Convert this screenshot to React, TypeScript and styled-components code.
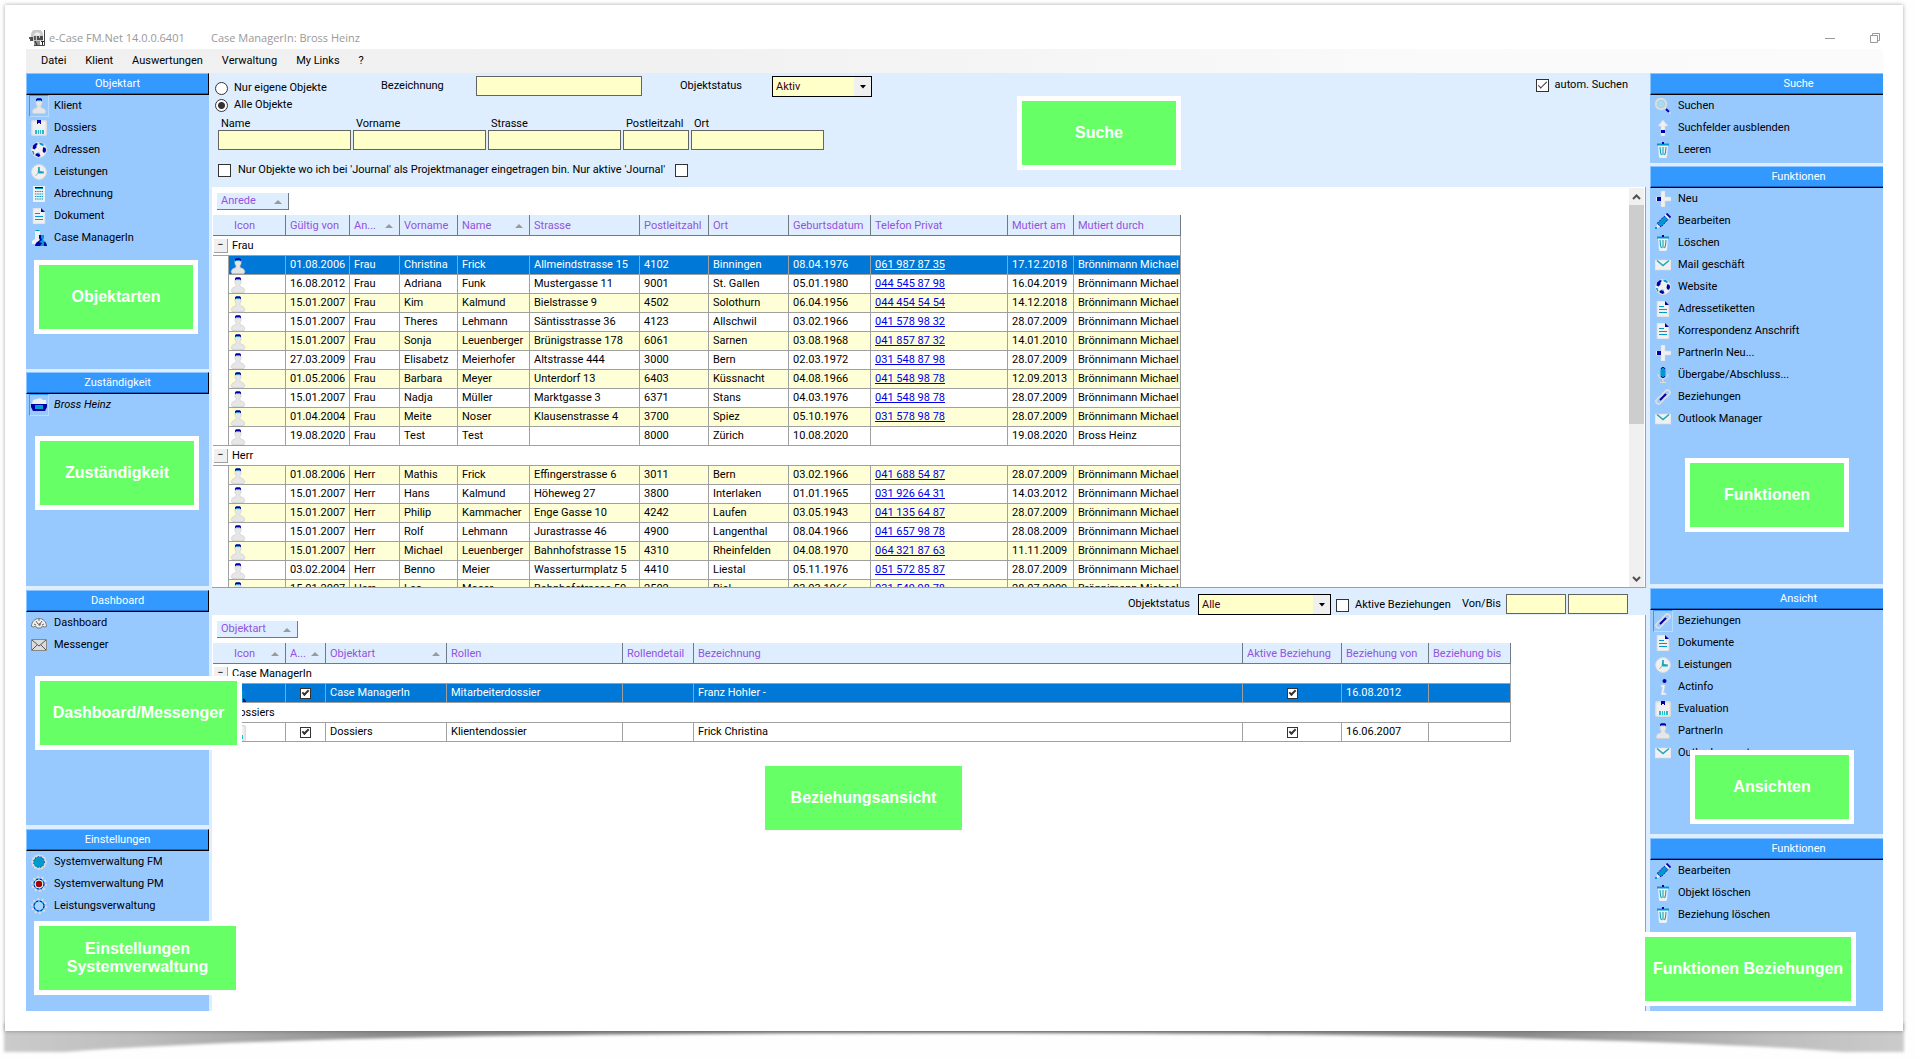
import React from "react";
import styled, { createGlobalStyle, css } from "styled-components";

const ui = 'Roboto, "Liberation Sans", Arial, sans-serif';
const c = {
  panel: "#97c9ff",
  head: "#3399ff",
  pale: "#deeeff",
  field: "#ffffca",
  line: "#a0a0a0",
  violet: "#9452e0",
  select: "#0078d7",
  green: "#66ff66",
};

const GlobalStyle = createGlobalStyle`
  *, *::before, *::after { box-sizing: border-box; }
  body { margin: 0; background: #fefefe; font: 11px/16px ${ui}; color: #000; }
  button, input, select { font: inherit; color: inherit; margin: 0; padding: 0; border-radius: 0; }
  h1, h2 { margin: 0; font: inherit; }
`;

/* ---------- frame ---------- */
const Page = styled.div`
  padding: 5px 14px 0 5px;
`;
const Paper = styled.main`
  position: relative;
  z-index: 1;
  background: #fff;
  padding: 20px 20px 20px 21px;
  box-shadow: 0 0 4px rgba(0, 0, 0, 0.35);
`;
const Curl = styled.svg`
  display: block;
  position: relative;
  width: 100%;
  height: 29px;
  overflow: visible;
`;
const TitleBar = styled.header`
  display: flex;
  align-items: center;
  height: 24px;
  padding: 2px 3px 0;
  font: 11px/16px "Open Sans", "Noto Sans", sans-serif;
  color: #999;
`;
const AppName = styled.h1`
  width: 162px;
  margin-left: 4px;
  white-space: nowrap;
`;
const WindowButtons = styled.div`
  display: flex;
  gap: 35px;
  margin-left: auto;
  button {
    display: flex;
    border: 0;
    background: none;
  }
`;
const MenuBar = styled.nav`
  display: flex;
  align-items: center;
  gap: 19px;
  height: 24px;
  padding-left: 15px;
  background: linear-gradient(90deg, #f0f0f0, #f1f1f1 35%, #fafafa 75%, #fbfbfb);
  button {
    border: 0;
    background: none;
  }
`;
const Body = styled.div`
  display: grid;
  grid-template-columns: 183px minmax(0, 1fr) 233px;
  min-height: 938px;
  background: ${c.pale};
`;
const Side = styled.aside`
  position: relative;
  display: flex;
  flex-direction: column;
`;
const Panel = styled.section<{ $h?: number; $gap?: number }>`
  position: relative;
  background: ${c.panel};
  margin-bottom: ${(p) => p.$gap ?? 0}px;
  ${(p) => (p.$h ? `min-height: ${p.$h}px;` : "flex: 1;")}
`;
const PanelHead = styled.h2<{ $cut?: boolean }>`
  height: 22px;
  border-top: 1px solid #8cc4ff;
  border-left: 1px solid #8cc4ff;
  border-bottom: 1px solid #000;
  box-shadow: inset 0 -1px 0 #1a66bb;
  background: ${c.head};
  color: #fff;
  text-align: center;
  line-height: 20px;
  ${(p) => (p.$cut ? "padding-left: 63px;" : "border-right: 1px solid #000;")}
`;
const Item = styled.button<{ $italic?: boolean }>`
  display: flex;
  align-items: center;
  gap: 5px;
  width: 100%;
  height: 22px;
  padding: 0 0 0 3px;
  border: 0;
  background: none;
  text-align: left;
  white-space: nowrap;
  font-style: ${(p) => (p.$italic ? "italic" : "normal")};
`;
const IconBox = styled.span<{ $on?: boolean }>`
  display: flex;
  width: 20px;
  height: 22px;
  padding: 2px 1px;
  border: 1px solid transparent;
  ${(p) => p.$on && css`border-color: ${c.head} #b8dcff #b8dcff ${c.head};`}
`;
const Callout = styled.div<{ $x: number; $y: number; $w?: number }>`
  position: absolute;
  z-index: 3;
  left: ${(p) => p.$x}px;
  top: ${(p) => p.$y}px;
  width: ${(p) => p.$w ?? 164}px;
  height: 74px;
  display: flex;
  align-items: center;
  justify-content: center;
  border: 5px solid #fff;
  background: ${c.green};
  color: #fff;
  font: bold 16px/18px "Liberation Sans", Arial, sans-serif;
  text-align: center;
  white-space: pre-line;
`;

/* ---------- centre ---------- */
const Centre = styled.div`
  display: flex;
  flex-direction: column;
  min-width: 0;
  padding-left: 3px;
`;
const SearchForm = styled.form`
  position: relative;
  display: flex;
  flex-direction: column;
  height: 114px;
  padding: 3px 22px 0 3px;
`;
const SearchTop = styled.div`
  display: flex;
  align-items: flex-start;
  height: 41px;
`;
const Radios = styled.div`
  display: flex;
  flex-direction: column;
  gap: 1px;
  width: 166px;
  padding-top: 4px;
`;
const Check = styled.label<{ $gap?: number; $w?: number; $end?: boolean }>`
  display: flex;
  align-items: center;
  gap: ${(p) => p.$gap ?? 6}px;
  white-space: nowrap;
  ${(p) => p.$w && `width: ${p.$w}px; padding-top: 3px;`}
  ${(p) => p.$end && "margin-left: auto; padding-top: 1px;"}
`;
const Caption = styled.label<{ $w?: number }>`
  width: ${(p) => (p.$w ? p.$w + "px" : "auto")};
  padding-top: 2px;
  white-space: nowrap;
`;
const RadioInput = styled.input.attrs({ type: "radio" })`
  appearance: none;
  width: 13px;
  height: 13px;
  border: 1px solid #333;
  border-radius: 50%;
  background: #fff;
  &:checked {
    background: radial-gradient(circle, #333 0 3px, #fff 4px);
  }
`;
const CheckInput = styled.input.attrs({ type: "checkbox" })<{ $small?: boolean }>`
  appearance: none;
  display: grid;
  place-items: center;
  flex: none;
  width: ${(p) => (p.$small ? 11 : 13)}px;
  height: ${(p) => (p.$small ? 11 : 13)}px;
  border: 1px solid #333;
  background: #fff;
  &:checked::after {
    content: "";
    width: ${(p) => (p.$small ? 7 : 9)}px;
    height: 4px;
    margin-bottom: 2px;
    border: solid #333;
    border-width: 0 0 ${(p) => (p.$small ? "2px 2px" : "1px 1px")};
    border-width: ${(p) => (p.$small ? "0 0 2px 2px" : "0 0 1px 1px")};
    transform: rotate(-45deg);
  }
`;
const Field = styled.input<{ $w: number }>`
  display: block;
  width: ${(p) => p.$w}px;
  height: 20px;
  border: 1px solid #646464;
  background: ${c.field};
`;
const Combo = styled.span<{ $w: number }>`
  position: relative;
  display: flex;
  width: ${(p) => p.$w}px;
  height: 21px;
  border: 1px solid #000;
  background: ${c.field};
  select {
    appearance: none;
    flex: 1;
    padding-left: 3px;
    border: 0;
    background: none;
    color: #400020;
  }
  svg {
    position: absolute;
    right: 0;
    top: 0;
    pointer-events: none;
  }
`;
const FieldRow = styled.div`
  display: flex;
  gap: 2px;
  padding-left: 3px;
  label span {
    display: block;
    height: 13px;
    padding-left: 3px;
    line-height: 14px;
  }
`;
const JournalRow = styled.div`
  display: flex;
  align-items: center;
  gap: 10px;
  margin-top: 12px;
  padding-left: 3px;
`;
const Pane = styled.section<{ $h?: number }>`
  position: relative;
  margin-right: 4px;
  background: #fff;
  border-right: 1px solid ${c.line};
  overflow: hidden;
  ${(p) => (p.$h ? `height: ${p.$h}px; border-bottom: 1px solid ${c.line};` : "flex: 1;")}
`;
const GroupChip = styled.button<{ $w: number }>`
  display: flex;
  align-items: center;
  justify-content: space-between;
  width: ${(p) => p.$w}px;
  height: 17px;
  margin: 6px 0 5px 5px;
  padding: 0 6px 0 4px;
  border: solid #6f7a86;
  border-width: 0 1px 1px 0;
  background: ${c.pale};
  color: ${c.violet};
`;
const Grid = styled.table`
  table-layout: fixed;
  width: 0;
  margin-left: 1px;
  border-collapse: separate;
  border-spacing: 0;
  white-space: nowrap;
`;
const Th = styled.th<{ $icon?: boolean }>`
  height: 21px;
  padding: 1px 6px 0 ${(p) => (p.$icon ? 21 : 4)}px;
  border: solid #6f7a86;
  border-width: 0 1px 1px 0;
  background: ${c.pale};
  color: ${c.violet};
  font-weight: normal;
  text-align: left;
  & > div {
    display: flex;
    align-items: center;
    justify-content: space-between;
  }
`;
const GroupCell = styled.td`
  height: 20px;
  padding: 0;
  border: solid ${c.line};
  border-width: 0 1px 1px 0;
  & > div {
    display: flex;
    align-items: center;
    gap: 4px;
    padding-left: 1px;
  }
`;
const Toggle = styled.button`
  width: 14px;
  height: 14px;
  border: solid ${c.line};
  border-width: 0 1px 1px 0;
  background: #f0f0f0;
  line-height: 10px;
`;
const Indent = styled.td<{ $end?: boolean }>`
  padding: 0;
  border-right: 1px solid ${c.line};
  border-bottom: ${(p) => (p.$end ? `1px solid ${c.line}` : 0)};
`;
const Row = styled.tr<{ $tone: "selected" | "odd" | "plain" }>`
  height: 19px;
  ${(p) => p.$tone === "selected" && css`color: #fff; --row: ${c.select};`}
  ${(p) => p.$tone === "odd" && css`--row: #ffffd7;`}
`;
const Td = styled.td`
  height: 19px;
  padding: 0 0 0 4px;
  overflow: hidden;
  border: solid ${c.line};
  border-width: 0 1px 1px 0;
  background: var(--row, #fff);
  line-height: 18px;
`;
const PhoneLink = styled.a<{ $sel?: boolean }>`
  color: ${(p) => (p.$sel ? "#fff" : "#0000e6")};
`;
const IconTd = styled(Td)`
  padding: 1px 0 0 1px;
  svg { display: block; }
`;
const CheckTd = styled(Td)`
  padding: 0;
  input { margin: 0 auto; }
`;
const ScrollBar = styled.div`
  position: absolute;
  top: 1px;
  right: 1px;
  bottom: 0;
  width: 15px;
  display: flex;
  flex-direction: column;
  background: #f0f0f0;
  svg { display: block; }
`;
const Thumb = styled.div`
  height: 219px;
  margin-bottom: auto;
  background: #cdcdcd;
`;
const FilterBar = styled.form`
  display: flex;
  justify-content: flex-end;
  align-items: flex-start;
  height: 27px;
  padding: 6px 18px 0 0;
  margin-right: 4px;
  overflow: hidden;
`;
const Space = styled.span<{ $w: number }>`
  width: ${(p) => p.$w}px;
`;

/* ---------- icons ---------- */
const G = "#dcdcdc", L = "#f0f0f0", T = "#0099cc", N = "#0000aa";
type IconName =
  | "person" | "box" | "globe" | "clock" | "calc" | "doc" | "people" | "tray" | "gauge" | "envelope"
  | "gearFull" | "gearRed" | "gear" | "search" | "up" | "trash" | "plus" | "pencil" | "mail" | "mic" | "link" | "info";

const gearTeeth = (
  <circle cx="8" cy="8" r="6.8" fill="none" stroke={G} strokeWidth="2.2" strokeDasharray="2.2 2.07" />
);
const shapes: Record<IconName, React.ReactNode> = {
  person: (
    <>
      <path d="M5 2.500h6v3.500l-1 1.500v2l3.500 1.500 1.300 2.500-.8 2H2l-.8-2 1.300-2.500L6 9.500v-2L5 6z" fill="#e6e6e6" stroke="#cfcfcf" strokeWidth=".7" />
      <path d="M5 3.500V1.500L6 .3h4l1 1.200v2l-1.200-1.200H6.200z" fill={N} />
      <path d="M6.200 2.300h3.600v.8H6.200z" fill={T} />
    </>
  ),
  box: (
    <>
      <rect y="0" width="16" height="16" rx="2" fill={G} />
      <rect x="1.5" y="1.5" width="13" height="13" fill={L} />
      <path d="M6 0h4v4H9V3H7v1H6z" fill={N} />
      <path d="M4 10h2v4H4zM7 10h1v4H7zM9 10h1v4H9zM11 10h2v4h-2z" fill="#22bbd0" />
    </>
  ),
  globe: (
    <>
      <circle cx="8" cy="8" r="7.500" fill={L} stroke={G} />
      <path d="M1.500 6.500l.5-3 3-2.500 2 .8-1.500 1.700 0 2-2 2zM4.500 12l2-1 2 1 1 2-2 1-3-1.500z" fill={N} />
      <path d="M8 .8l3 .3 2 2-1 1-3-1.500zM.8 9l1.700 0 1 3-1 .8zM6 11l2-.5 1 1.500z" fill={T} />
      <path d="M12.500 5l2 1 .6 2-.6 2-1.500 1-1.500-2 .5-3z" fill={N} />
    </>
  ),
  clock: (
    <>
      <circle cx="8" cy="8" r="7.400" fill={L} stroke={G} />
      <path d="M7.200 3h1.600v4l4 .6v1.800H8.200l-1.500-.4z" fill="#16a5bd" />
      <path d="M7.800 8.500l-3.300 3.300" stroke="#7aa" strokeWidth=".9" />
    </>
  ),
  calc: (
    <>
      <path d="M2 0h12v16H2z" fill={L} />
      <path d="M4 2.500h8" stroke={T} strokeWidth="1" />
      <path d="M4 1.500h8" stroke={N} strokeWidth="1" />
      <path d="M4 5.500h8M4 8h8M4 10.500h8M4 13h8" stroke={T} strokeWidth="1.200" strokeDasharray="1.500 .7" />
    </>
  ),
  doc: (
    <>
      <path d="M2 0h8l4 4v12H2z" fill={L} stroke="#d4d4d4" strokeWidth=".8" />
      <path d="M10 0l4 4h-4z" fill={N} />
      <path d="M4 5.500h5M4 8.500h8M4 11.500h8" stroke={T} strokeWidth="1.200" />
    </>
  ),
  people: (
    <>
      <path d="M4 1h5v3L8 7l2 3v4H1v-3l3-2V6z" fill={L} />
      <path d="M4 1h5L8 0H5z" fill={T} />
      <path d="M8 5h5v3l-1 2 3 2 1 4H4l1-3 4-3-1-2z" fill={T} />
      <path d="M8 5h2v3l1 2-3 2 3 1-2 3H4l1-3 4-3-1-2zM13 12l2 1 1 3h-3z" fill={N} />
    </>
  ),
  tray: (
    <>
      <path d="M2 3l4-1 3-1 3 2 3 0v4H1z" fill={L} />
      <path d="M0 7h16v3l-2 4H2l-2-4z" fill={N} />
      <path d="M4 8h8v4H4z" fill={T} />
    </>
  ),
  gauge: (
    <>
      <path d="M.5 11.500C.5 6.500 4 3.500 8 3.500s7.500 3 7.500 8l-2 .5-2-1-1.500 2h-4l-1.500-2-2 1z" fill={L} stroke="#777" />
      <path d="M3 9l2 1M5 6l2 3M8 4v2M11 6l-2 3M13 9l-2 1" stroke="#666" />
      <circle cx="8.500" cy="9.500" r="1.200" fill="#666" />
    </>
  ),
  envelope: (
    <>
      <path d="M.5 2.500h15v11H.5z" fill={G} stroke="#888" />
      <path d="M1 3l7 6 7-6M1 13l5-5M15 13l-5-5" fill="none" stroke="#555" />
    </>
  ),
  gearFull: (
    <>
      <circle cx="8" cy="8" r="7" fill={G} stroke={G} strokeDasharray="2 1.500" strokeWidth="1.500" />
      <circle cx="8" cy="8" r="5.500" fill={T} />
      <circle cx="8" cy="8" r="5.500" fill="none" stroke={N} strokeWidth=".8" strokeDasharray="1 2" />
    </>
  ),
  gearRed: (
    <>
      {gearTeeth}
      <circle cx="8" cy="8" r="5" fill={L} stroke={T} />
      <circle cx="8" cy="8" r="5" fill="none" stroke={N} strokeDasharray="2 2" />
      <circle cx="8" cy="8" r="3.200" fill="#a00000" />
    </>
  ),
  gear: (
    <>
      {gearTeeth}
      <circle cx="8" cy="8" r="5" fill="#a8d4ff" stroke={T} strokeWidth="1.200" />
      <circle cx="8" cy="8" r="5" fill="none" stroke={N} strokeDasharray="2 2" />
    </>
  ),
  search: (
    <>
      <circle cx="6" cy="6" r="5" fill="none" stroke={G} strokeWidth="2.400" />
      <circle cx="6" cy="6" r="3.600" fill="#a8dcf4" stroke="#9cc" strokeWidth=".6" />
      <path d="M9.500 10l1.500 1.500" stroke={G} strokeWidth="2" />
      <path d="M11 11l3 3" stroke={N} strokeWidth="2" />
      <path d="M14 14l1.500 1.500" stroke={G} strokeWidth="1.500" />
    </>
  ),
  up: (
    <>
      <path d="M8 0l5 6h-3v10H6V6H3z" fill={L} stroke="#d8d8d8" strokeWidth=".5" />
      <path d="M6 10h4v3H6z" fill={N} />
    </>
  ),
  trash: (
    <>
      <path d="M3 3h10l-1 12-1 1H5l-1-1z" fill={L} />
      <path d="M2 1.500h12v2H2z" fill={T} />
      <path d="M7 0h2v2H7z" fill={N} />
      <path d="M5 5l.6 6 1 2M8 5v8M11 5l-.6 6-1 2" fill="none" stroke="#16a5bd" strokeWidth="1.100" />
    </>
  ),
  plus: (
    <>
      <path d="M6 0h4v6h6v4h-6v6H6v-6H1V6h5z" fill={L} stroke="#dadada" strokeWidth=".5" />
      <path d="M2 6h4v4H2z" fill={N} />
    </>
  ),
  pencil: (
    <>
      <path d="M9.500 3l3.500 3.500L6 14 2 10.500z" fill={T} stroke={N} strokeWidth=".9" strokeDasharray="2 1" />
      <path d="M9.500 2.500l4 4 1.500-2-4-3.500z" fill={L} />
      <path d="M11.500 .5l4 4" stroke={N} strokeWidth="1.800" />
      <path d="M2 11l3 3-3.500 1z" fill={L} />
      <path d="M0 14h2v2H0z" fill={T} />
    </>
  ),
  mail: (
    <>
      <path d="M0 3h16v10H0z" fill={L} stroke="#d8d8d8" strokeWidth=".6" />
      <path d="M2 3.500l6 5 6-5" fill="none" stroke="#16a5bd" strokeWidth="1.400" />
    </>
  ),
  mic: (
    <>
      <path d="M3 7c0 6 10 6 10 0M8 11v4M5 15.500h6" fill="none" stroke={G} strokeWidth="1.200" />
      <rect x="5.500" y=".5" width="5" height="10" rx="2.500" fill={T} />
      <path d="M6 2l1-1.500h2L10 2M6 9l1 1.500h2L10 9" fill="none" stroke={N} />
    </>
  ),
  link: (
    <>
      <rect x="6.500" y="2.500" width="9" height="5" rx="2.500" fill="none" stroke={G} strokeWidth="1.800" transform="rotate(-45 11 5)" />
      <rect x=".5" y="8.500" width="9" height="5" rx="2.500" fill="none" stroke={G} strokeWidth="1.800" transform="rotate(-45 5 11)" />
      <path d="M5 11l6-6" stroke={N} strokeWidth="2" />
    </>
  ),
  info: (
    <>
      <circle cx="9.500" cy="2" r="2" fill={N} />
      <path d="M6 6h4l-1.500 8H11v2H6l1.500-8H6z" fill={L} stroke="#d8d8d8" strokeWidth=".5" />
    </>
  ),
};
const Icon = ({ name }: { name: IconName }) => (
  <svg width="16" height="16" viewBox="0 0 16 16" aria-hidden="true">{shapes[name]}</svg>
);
const Sort = () => (
  <svg width="8" height="5" viewBox="0 0 8 5" aria-hidden="true"><path d="M0 5l4-4 4 4z" fill="#9a9a9a" /></svg>
);
const Drop = () => (
  <svg width="17" height="19" viewBox="0 0 17 19" aria-hidden="true">
    <path d="M0 0h17v19H0z" fill="#f0f0f0" /><path d="M6 8h6l-3 3.500z" fill="#000" />
  </svg>
);

/* ---------- data ---------- */
type Entry = [IconName, string];
const objektart: Entry[] = [
  ["person", "Klient"], ["box", "Dossiers"], ["globe", "Adressen"], ["clock", "Leistungen"],
  ["calc", "Abrechnung"], ["doc", "Dokument"], ["people", "Case ManagerIn"],
];
const einstellungen: Entry[] = [
  ["gearFull", "Systemverwaltung FM"], ["gearRed", "Systemverwaltung PM"], ["gear", "Leistungsverwaltung"],
];
const suche: Entry[] = [["search", "Suchen"], ["up", "Suchfelder ausblenden"], ["trash", "Leeren"]];
const funktionen: Entry[] = [
  ["plus", "Neu"], ["pencil", "Bearbeiten"], ["trash", "Löschen"], ["mail", "Mail geschäft"], ["globe", "Website"],
  ["doc", "Adressetiketten"], ["doc", "Korrespondenz Anschrift"], ["plus", "PartnerIn Neu..."],
  ["mic", "Übergabe/Abschluss..."], ["link", "Beziehungen"], ["mail", "Outlook Manager"],
];
const ansicht: Entry[] = [
  ["link", "Beziehungen"], ["doc", "Dokumente"], ["clock", "Leistungen"], ["info", "Actinfo"],
  ["box", "Evaluation"], ["person", "PartnerIn"], ["mail", "Outlook export"],
];
const beziehung: Entry[] = [["pencil", "Bearbeiten"], ["trash", "Objekt löschen"], ["trash", "Beziehung löschen"]];

const BM = "Brönnimann Michael";
const frau = [
  ["01.08.2006", "Frau", "Christina", "Frick", "Allmeindstrasse 15", "4102", "Binningen", "08.04.1976", "061 987 87 35", "17.12.2018", BM],
  ["16.08.2012", "Frau", "Adriana", "Funk", "Mustergasse 11", "9001", "St. Gallen", "05.01.1980", "044 545 87 98", "16.04.2019", BM],
  ["15.01.2007", "Frau", "Kim", "Kalmund", "Bielstrasse 9", "4502", "Solothurn", "06.04.1956", "044 454 54 54", "14.12.2018", BM],
  ["15.01.2007", "Frau", "Theres", "Lehmann", "Säntisstrasse 36", "4123", "Allschwil", "03.02.1966", "041 578 98 32", "28.07.2009", BM],
  ["15.01.2007", "Frau", "Sonja", "Leuenberger", "Brünigstrasse 178", "6061", "Sarnen", "03.08.1968", "041 857 87 32", "14.01.2010", BM],
  ["27.03.2009", "Frau", "Elisabetz", "Meierhofer", "Altstrasse 444", "3000", "Bern", "02.03.1972", "031 548 87 98", "28.07.2009", BM],
  ["01.05.2006", "Frau", "Barbara", "Meyer", "Unterdorf 13", "6403", "Küssnacht", "04.08.1966", "041 548 98 78", "12.09.2013", BM],
  ["15.01.2007", "Frau", "Nadja", "Müller", "Marktgasse 3", "6371", "Stans", "04.03.1976", "041 548 98 78", "28.07.2009", BM],
  ["01.04.2004", "Frau", "Meite", "Noser", "Klausenstrasse 4", "3700", "Spiez", "05.10.1976", "031 578 98 78", "28.07.2009", BM],
  ["19.08.2020", "Frau", "Test", "Test", "", "8000", "Zürich", "10.08.2020", "", "19.08.2020", "Bross Heinz"],
];
const herr = [
  ["01.08.2006", "Herr", "Mathis", "Frick", "Effingerstrasse 6", "3011", "Bern", "03.02.1966", "041 688 54 87", "28.07.2009", BM],
  ["15.01.2007", "Herr", "Hans", "Kalmund", "Höheweg 27", "3800", "Interlaken", "01.01.1965", "031 926 64 31", "14.03.2012", BM],
  ["15.01.2007", "Herr", "Philip", "Kammacher", "Enge Gasse 10", "4242", "Laufen", "03.05.1943", "041 135 64 87", "28.07.2009", BM],
  ["15.01.2007", "Herr", "Rolf", "Lehmann", "Jurastrasse 46", "4900", "Langenthal", "08.04.1966", "041 657 98 78", "28.08.2009", BM],
  ["15.01.2007", "Herr", "Michael", "Leuenberger", "Bahnhofstrasse 15", "4310", "Rheinfelden", "04.08.1970", "064 321 87 63", "11.11.2009", BM],
  ["03.02.2004", "Herr", "Benno", "Meier", "Wasserturmplatz 5", "4410", "Liestal", "05.11.1976", "051 572 85 87", "28.07.2009", BM],
  ["15.01.2007", "Herr", "Leo", "Moser", "Bahnhofstrasse 50", "2502", "Biel", "03.03.1966", "031 549 98 78", "28.07.2009", BM],
];
const clientCols: [string, number, boolean?][] = [
  ["Gültig von", 64], ["An...", 50, true], ["Vorname", 58], ["Name", 72, true], ["Strasse", 110], ["Postleitzahl", 69],
  ["Ort", 80], ["Geburtsdatum", 82], ["Telefon Privat", 137], ["Mutiert am", 66], ["Mutiert durch", 107],
];
const relationCols: [string, number, boolean?][] = [
  ["A...", 40, true], ["Objektart", 121, true], ["Rollen", 176], ["Rollendetail", 71], ["Bezeichnung", 549],
  ["Aktive Beziehung", 99], ["Beziehung von", 87], ["Beziehung bis", 82],
];

/* ---------- parts ---------- */
const Items = ({ entries, active }: { entries: Entry[]; active?: number }) => (
  <>
    {entries.map(([icon, text], i) => (
      <Item key={text} type="button">
        <IconBox $on={i === active}><Icon name={icon} /></IconBox>
        {text}
      </Item>
    ))}
  </>
);

const GridHead = ({ cols, iconSort }: { cols: [string, number, boolean?][]; iconSort?: boolean }) => (
  <>
    <colgroup>
      <col style={{ width: 16 }} />
      <col style={{ width: 57 }} />
      {cols.map(([name, w]) => <col key={name} style={{ width: w }} />)}
    </colgroup>
    <thead>
      <tr>
        <Th colSpan={2} $icon><div>Icon{iconSort && <Sort />}</div></Th>
        {cols.map(([name, , sorted]) => (
          <Th key={name}><div>{name}{sorted && <Sort />}</div></Th>
        ))}
      </tr>
    </thead>
  </>
);

const GroupRow = ({ title, span }: { title: string; span: number }) => (
  <tr>
    <GroupCell colSpan={span}>
      <div><Toggle type="button" aria-label={title + " zuklappen"}>−</Toggle>{title}</div>
    </GroupCell>
  </tr>
);

const ClientRows = ({ rows, selected }: { rows: string[][]; selected?: number }) => (
  <>
    {rows.map((row, i) => (
      <Row key={i} $tone={i === selected ? "selected" : i % 2 === 0 ? "odd" : "plain"}>
        <Indent $end={i === rows.length - 1} />
        <IconTd><Icon name="person" /></IconTd>
        {row.map((cell, k) => (
          <Td key={k}>
            {k === 8 && cell ? (
              <PhoneLink $sel={i === selected} href={"tel:" + cell.replace(/ /g, "")}>{cell}</PhoneLink>
            ) : cell}
          </Td>
        ))}
      </Row>
    ))}
  </>
);

const RelationRow = ({ icon, cells, selected }: { icon: IconName; cells: string[]; selected?: boolean }) => (
  <Row $tone={selected ? "selected" : "plain"}>
    <Indent $end />
    <IconTd><Icon name={icon} /></IconTd>
    <CheckTd><CheckInput $small defaultChecked aria-label="Auswahl" /></CheckTd>
    <Td>{cells[0]}</Td>
    <Td>{cells[1]}</Td>
    <Td />
    <Td>{cells[2]}</Td>
    <CheckTd><CheckInput $small defaultChecked aria-label="Aktive Beziehung" /></CheckTd>
    <Td>{cells[3]}</Td>
    <Td />
  </Row>
);

const searchFields: [string, number][] = [
  ["Name", 133], ["Vorname", 133], ["Strasse", 133], ["Postleitzahl", 66], ["Ort", 133],
];

export default function App() {
  return (
    <>
      <GlobalStyle />
      <Page>
        <Paper>
          <TitleBar>
            <svg width="16" height="16" viewBox="0 0 16 16" aria-hidden="true">
              <path d="M2 6a6 6 0 0 1 12-2v7H2z" fill="#c8c8c8" />
              <path d="M4 5l4-3 4 2-2 2z" fill="#eee" />
              <path d="M15.500 0v15.500H5" fill="none" stroke="#444" />
              <path d="M0 8h4M1 10h3M6 6v4M8 7h2M11 7h3M8 9h6" stroke="#222" strokeWidth="1.300" />
              <path d="M6 15v-4l2 4v-4M10 11v4M12 11.500h3M13.500 11v4" fill="none" stroke="#222" />
            </svg>
            <AppName>e-Case FM.Net 14.0.0.6401</AppName>
            <span>Case ManagerIn: Bross Heinz</span>
            <WindowButtons>
              <button type="button" aria-label="Minimieren">
                <svg width="10" height="10" viewBox="0 0 10 10"><path d="M0 5.500h10" stroke="#999" /></svg>
              </button>
              <button type="button" aria-label="Wiederherstellen">
                <svg width="10" height="10" viewBox="0 0 10 10"><path d="M.5 2.500h7v7h-7zM2.500 2.500v-2h7v7h-2" fill="none" stroke="#999" /></svg>
              </button>
            </WindowButtons>
          </TitleBar>
          <MenuBar>
            {["Datei", "Klient", "Auswertungen", "Verwaltung", "My Links", "?"].map((m) => (
              <button key={m} type="button">{m}</button>
            ))}
          </MenuBar>
          <Body>
            <Side>
              <Panel $h={296} $gap={3}>
                <PanelHead>Objektart</PanelHead>
                <Items entries={objektart} active={0} />
                <Callout $x={8} $y={187}>Objektarten</Callout>
              </Panel>
              <Panel $h={214} $gap={4}>
                <PanelHead>Zuständigkeit</PanelHead>
                <Item type="button" $italic>
                  <IconBox $on><Icon name="tray" /></IconBox>
                  Bross Heinz
                </Item>
                <Callout $x={9} $y={64}>Zuständigkeit</Callout>
              </Panel>
              <Panel $h={235} $gap={4}>
                <PanelHead>Dashboard</PanelHead>
                <Items entries={[["gauge", "Dashboard"], ["envelope", "Messenger"]]} />
                <Callout $x={9} $y={86} $w={207}>Dashboard/Messenger</Callout>
              </Panel>
              <Panel>
                <PanelHead>Einstellungen</PanelHead>
                <Items entries={einstellungen} />
                <Callout $x={8} $y={92} $w={207}>{"Einstellungen\nSystemverwaltung"}</Callout>
              </Panel>
            </Side>

            <Centre>
              <SearchForm>
                <SearchTop>
                  <Radios>
                    <Check><RadioInput name="scope" />Nur eigene Objekte</Check>
                    <Check><RadioInput name="scope" defaultChecked />Alle Objekte</Check>
                  </Radios>
                  <Caption htmlFor="bez" $w={95}>Bezeichnung</Caption>
                  <Field id="bez" $w={166} />
                  <Space $w={38} />
                  <Caption htmlFor="status" $w={92}>Objektstatus</Caption>
                  <Combo $w={100}>
                    <select id="status"><option>Aktiv</option><option>Alle</option></select>
                    <Drop />
                  </Combo>
                  <Check $end><CheckInput defaultChecked />autom. Suchen</Check>
                </SearchTop>
                <FieldRow>
                  {searchFields.map(([name, w]) => (
                    <label key={name}><span>{name}</span><Field $w={w} /></label>
                  ))}
                </FieldRow>
                <JournalRow>
                  <Check $gap={7}>
                    <CheckInput />
                    Nur Objekte wo ich bei 'Journal' als Projektmanager eingetragen bin. Nur aktive 'Journal'
                  </Check>
                  <CheckInput aria-label="Nur aktive Journal" />
                </JournalRow>
                <Callout $x={805} $y={23}>Suche</Callout>
              </SearchForm>

              <Pane $h={401}>
                <GroupChip type="button" $w={72}>Anrede<Sort /></GroupChip>
                <Grid>
                  <GridHead cols={clientCols} />
                  <tbody>
                    <GroupRow title="Frau" span={13} />
                    <ClientRows rows={frau} selected={0} />
                    <GroupRow title="Herr" span={13} />
                    <ClientRows rows={herr} />
                  </tbody>
                </Grid>
                <ScrollBar>
                  <svg width="15" height="17" viewBox="0 0 15 17"><path d="M4 11l3.500-3.500L11 11" fill="none" stroke="#505050" strokeWidth="2" /></svg>
                  <Thumb />
                  <svg width="15" height="17" viewBox="0 0 15 17"><path d="M4 7l3.500 3.500L11 7" fill="none" stroke="#505050" strokeWidth="2" /></svg>
                </ScrollBar>
              </Pane>

              <FilterBar>
                <Caption htmlFor="status2" $w={70}>Objektstatus</Caption>
                <Combo $w={133}>
                  <select id="status2"><option>Alle</option><option>Aktiv</option></select>
                  <Drop />
                </Combo>
                <Space $w={5} />
                <Check $w={126}><CheckInput />Aktive Beziehungen</Check>
                <Caption htmlFor="von" $w={44}>Von/Bis</Caption>
                <Field id="von" $w={60} />
                <Space $w={2} />
                <Field aria-label="Bis" $w={60} />
              </FilterBar>

              <Pane>
                <GroupChip type="button" $w={81}>Objektart<Sort /></GroupChip>
                <Grid>
                  <GridHead cols={relationCols} iconSort />
                  <tbody>
                    <GroupRow title="Case ManagerIn" span={10} />
                    <RelationRow icon="people" selected cells={["Case ManagerIn", "Mitarbeiterdossier", "Franz Hohler -", "16.08.2012"]} />
                    <GroupRow title="Dossiers" span={10} />
                    <RelationRow icon="box" cells={["Dossiers", "Klientendossier", "Frick Christina", "16.06.2007"]} />
                  </tbody>
                </Grid>
                <Callout $x={548} $y={146} $w={207}>Beziehungsansicht</Callout>
              </Pane>
            </Centre>

            <Side>
              <Panel $h={90} $gap={3}>
                <PanelHead $cut>Suche</PanelHead>
                <Items entries={suche} />
              </Panel>
              <Panel $h={418} $gap={4}>
                <PanelHead $cut>Funktionen</PanelHead>
                <Items entries={funktionen} />
                <Callout $x={35} $y={292}>Funktionen</Callout>
              </Panel>
              <Panel $h={246} $gap={4}>
                <PanelHead $cut>Ansicht</PanelHead>
                <Items entries={ansicht} active={0} />
                <Callout $x={40} $y={162}>Ansichten</Callout>
              </Panel>
              <Panel>
                <PanelHead $cut>Funktionen</PanelHead>
                <Items entries={beziehung} />
                <Callout $x={-10} $y={94} $w={216}>Funktionen Beziehungen</Callout>
              </Panel>
            </Side>
          </Body>
        </Paper>
        <Curl viewBox="0 0 1900 29" preserveAspectRatio="none" aria-hidden="true">
          <defs>
            <linearGradient id="curl">
              <stop offset="0" stopColor="#cbcbcb" />
              <stop offset=".07" stopColor="#bdbdbd" />
              <stop offset=".2" stopColor="#8e8e8e" />
              <stop offset=".5" stopColor="#808080" />
              <stop offset=".8" stopColor="#8e8e8e" />
              <stop offset=".93" stopColor="#bdbdbd" />
              <stop offset="1" stopColor="#cbcbcb" />
            </linearGradient>
            <filter id="soft" x="-1%" y="-30%" width="102%" height="160%"><feGaussianBlur stdDeviation="1.500" /></filter>
          </defs>
          <path d="M-1 -8H1901V21H1840Q1600 2 950 2Q300 2 60 21H-1z" fill="url(#curl)" filter="url(#soft)" />
        </Curl>
      </Page>
    </>
  );
}
